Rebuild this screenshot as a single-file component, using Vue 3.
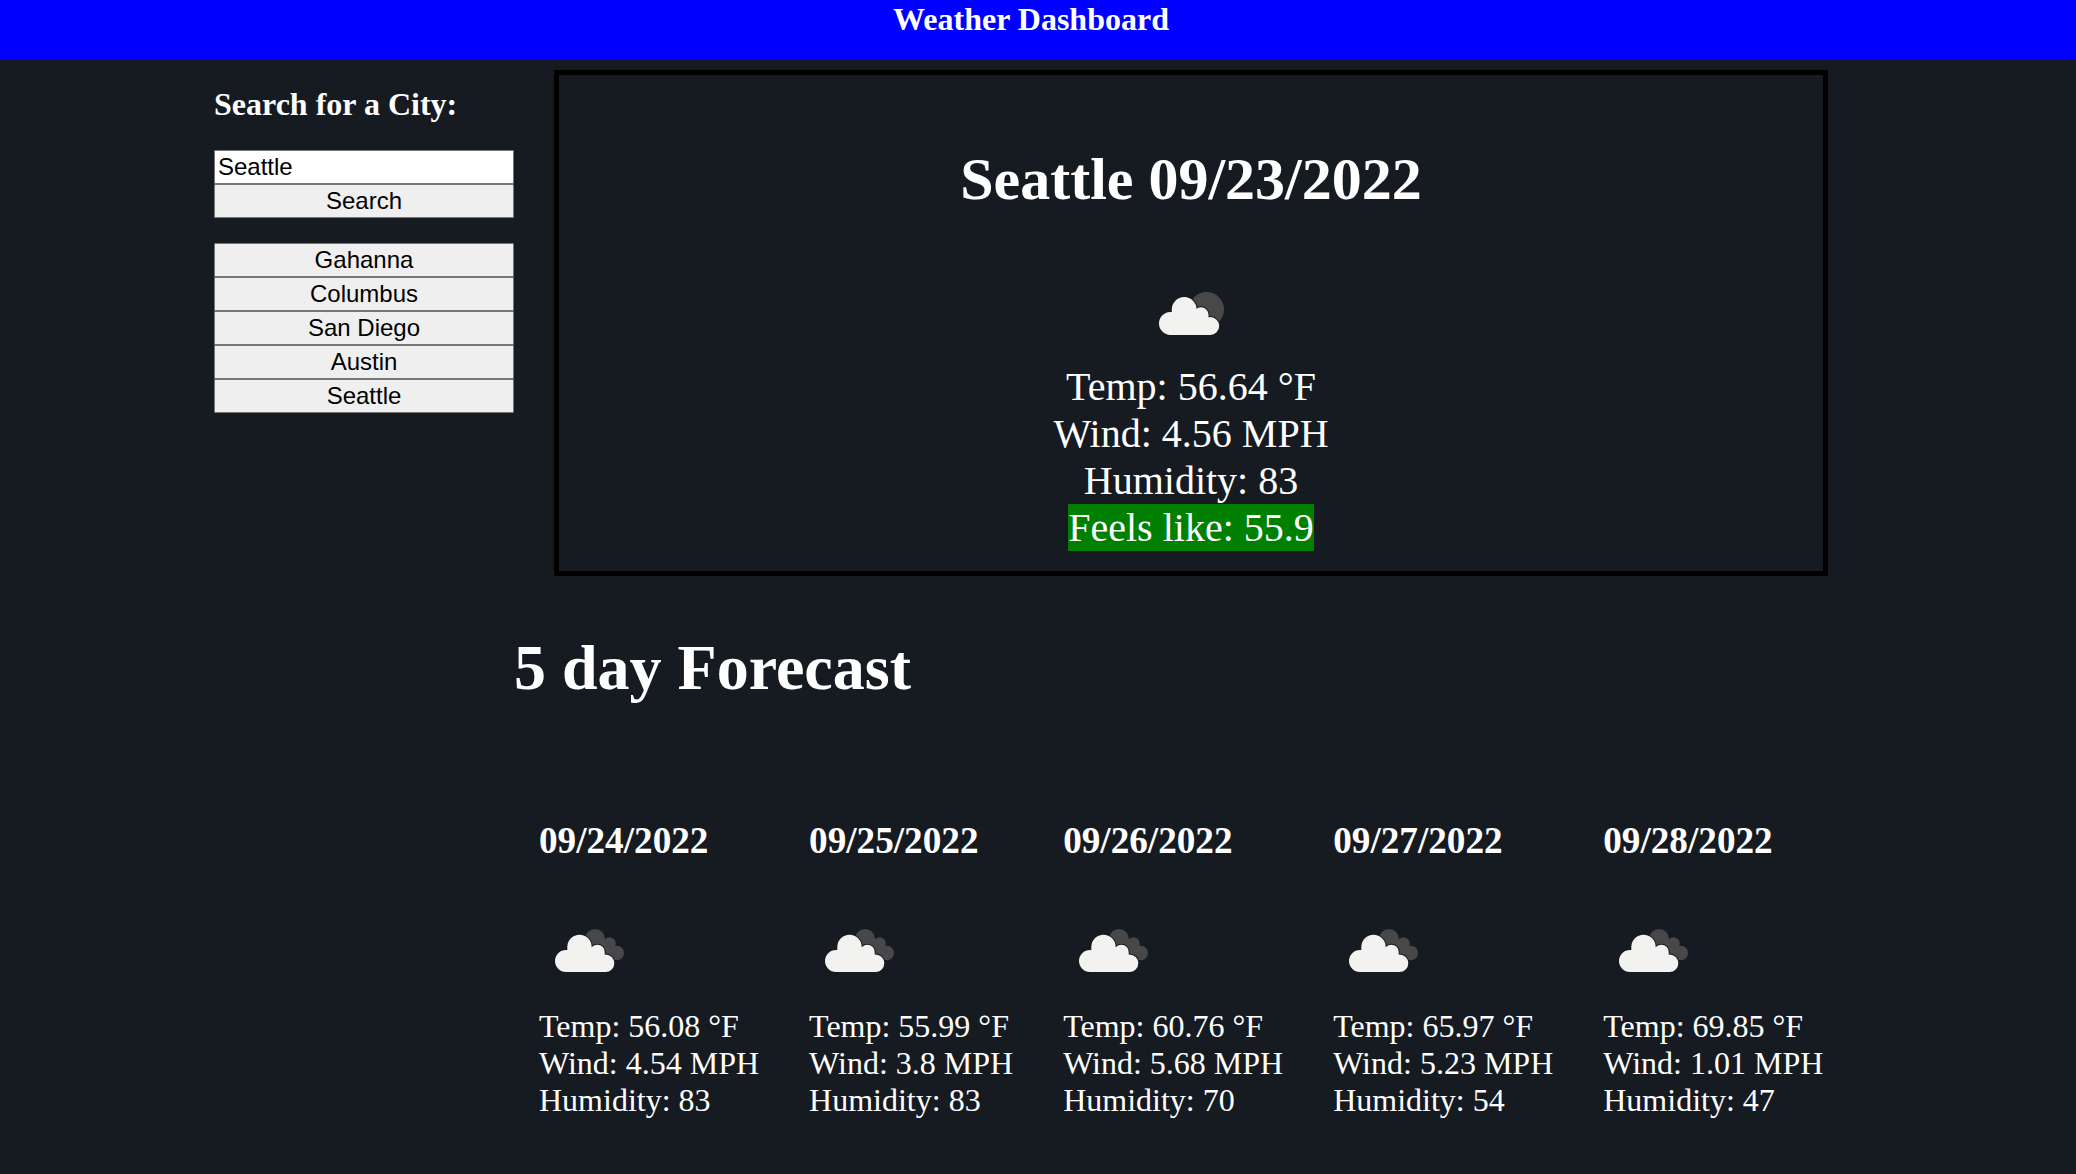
<script setup>
import { ref } from 'vue'

const city = ref('Seattle')
const history = ['Gahanna', 'Columbus', 'San Diego', 'Austin', 'Seattle']
const forecast = [
  { date: '09/24/2022', temp: '56.08', wind: '4.54', humidity: 83 },
  { date: '09/25/2022', temp: '55.99', wind: '3.8', humidity: 83 },
  { date: '09/26/2022', temp: '60.76', wind: '5.68', humidity: 70 },
  { date: '09/27/2022', temp: '65.97', wind: '5.23', humidity: 54 },
  { date: '09/28/2022', temp: '69.85', wind: '1.01', humidity: 47 },
]

// Clouds are a union of circles [cx, cy, r] plus a flat clockwise body.
const lobes = (circles) =>
  circles.map(([x, y, r]) => `M${x - r} ${y}a${r} ${r} 0 1 1 ${2 * r} 0a${r} ${r} 0 1 1 ${-2 * r} 0z`).join('')

const fewCloud =
  lobes([[29.5, 60.4, 11.5], [43.2, 46.5, 12.4], [60, 51.7, 7.5], [69.3, 63, 8.9]]) +
  'M30.800 47H55.600L60 52H67.500V60H70V71.900H29.500V60H30.800z'
const brokenCloud =
  lobes([[27, 61, 11], [40.5, 47, 12.2], [58.4, 52, 7.3], [66.5, 63.2, 8.8]]) +
  'M28.300 47H52.700L58 52H65.700V60H67V72H27V60H28.300z'
const backCloud =
  lobes([[56, 38.8, 9.8], [70.6, 43.4, 6.1], [77.700, 53, 7.3]]) + 'M56 38L66 39L70 43L76.500 44V47L78 53V60H56z'
</script>

<template>
  <div class="page">
    <header class="header"><h1>Weather Dashboard</h1></header>
    <div class="content">
      <aside class="sidebar">
        <h2>Search for a City:</h2>
        <input v-model="city" class="field" type="text" />
        <button class="field">Search</button>
        <div class="history">
          <button v-for="name in history" :key="name" class="field">{{ name }}</button>
        </div>
      </aside>
      <main class="main">
        <section class="current">
          <h2>Seattle 09/23/2022</h2>
          <svg class="icon" viewBox="0 0 100 100">
            <circle cx="65.500" cy="46.500" r="17.500" fill="#48484a" />
            <path class="cloud" :d="fewCloud" />
          </svg>
          <p>Temp: 56.64 °F</p>
          <p>Wind: 4.56 MPH</p>
          <p>Humidity: 83</p>
          <p class="feels">Feels like: 55.9</p>
        </section>
        <h2 class="forecast-title">5 day Forecast</h2>
        <section class="forecast">
          <article v-for="day in forecast" :key="day.date" class="day">
            <h3>{{ day.date }}</h3>
            <svg class="icon" viewBox="0 0 100 100">
              <path fill="#48484a" :d="backCloud" />
              <path class="cloud" :d="brokenCloud" />
            </svg>
            <p>Temp: {{ day.temp }} °F</p>
            <p>Wind: {{ day.wind }} MPH</p>
            <p>Humidity: {{ day.humidity }}</p>
          </article>
        </section>
      </main>
    </div>
  </div>
</template>

<style>
body {
  margin: 0;
  background: #161b22;
}
</style>

<style scoped>
.page {
  box-sizing: border-box;
  height: 1174px;
  overflow: hidden;
  color: #fff;
  background: #161b22;
  font-family: "Liberation Serif", "Times New Roman", serif;
  font-size: 32px;
}
h1, h2, h3, p {
  margin: 0;
}
.header {
  box-sizing: border-box;
  height: 60px;
  padding-right: 14px;
  background: #00f;
  text-align: center;
}
.header h1 {
  font-size: 32px;
  line-height: 38px;
}
.content {
  display: flex;
  padding-left: 214px;
}
.sidebar {
  width: 300px;
}
.sidebar h2 {
  margin: 26px 0 27px;
  font-size: 32px;
  line-height: 37px;
}
.field {
  display: block;
  box-sizing: border-box;
  width: 300px;
  height: 34px;
  margin: 0;
  padding: 1px 3px;
  border: 1px solid #767676;
  border-radius: 1px;
  background: #efefef;
  color: #000;
  font: 24px "Liberation Sans", Arial, sans-serif;
}
input.field {
  background: #fff;
}
.history {
  margin-top: 25px;
}
.main {
  width: 1314px;
}
.current {
  display: flex;
  flex-direction: column;
  align-items: center;
  box-sizing: border-box;
  width: 1274px;
  height: 506px;
  margin: 10px 0 0 40px;
  padding-top: 70px;
  border: 5px solid #000;
  font-size: 40px;
  line-height: 47px;
}
.current h2 {
  margin-bottom: 49px;
  font-size: 60px;
  line-height: 69px;
}
.icon {
  display: block;
  width: 100px;
  height: 100px;
}
.cloud {
  fill: #f2f2f0;
  stroke: #161b22;
  stroke-width: 2;
  paint-order: stroke;
}
.feels {
  background: green;
}
.forecast-title {
  margin-top: 55px;
  font-size: 64px;
  line-height: 74px;
}
.forecast {
  display: flex;
  gap: 50px;
  margin-top: 114px;
  padding-left: 25px;
  line-height: 37px;
  white-space: nowrap;
}
.day h3 {
  margin-bottom: 38px;
  font-size: 37.2px;
  line-height: 43px;
}
.day .icon {
  margin-bottom: 8px;
}
</style>
